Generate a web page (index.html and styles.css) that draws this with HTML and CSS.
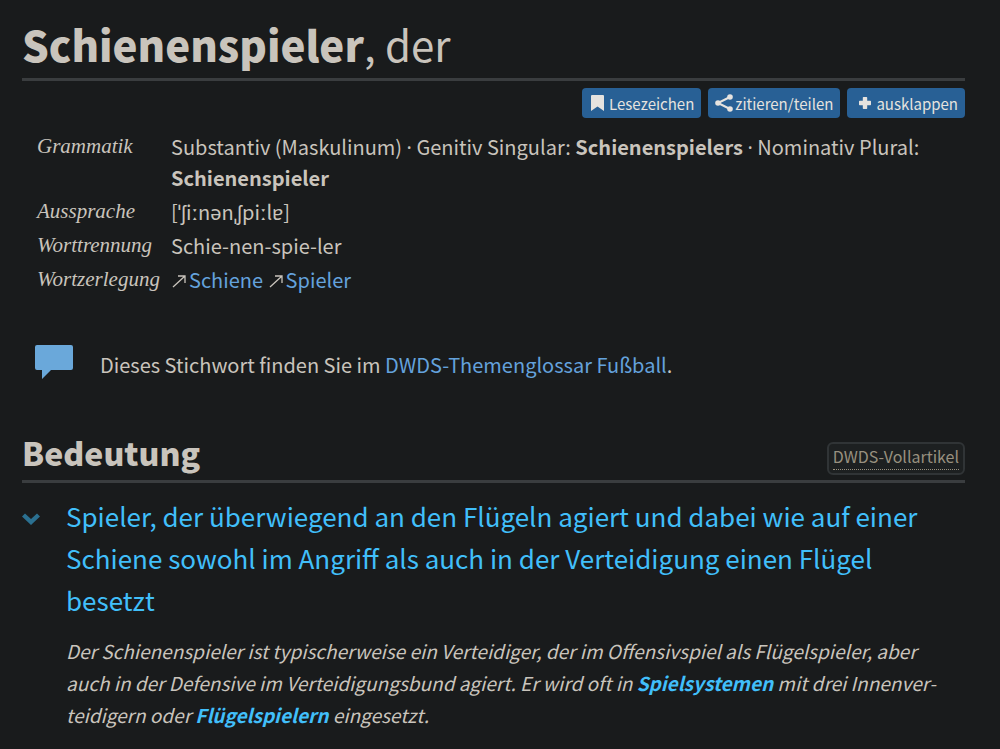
FILE: index.html
```html
<!DOCTYPE html>
<html lang="de">
<head>
  <meta charset="UTF-8">
  <meta name="viewport" content="width=device-width, initial-scale=1">
  <title>Schienenspieler</title>
  <link rel="stylesheet" href="styles.css">
</head>
<body>

  <main class="article">
    <h1 class="headword"><b>Schienenspieler</b>, der</h1>

    <div class="actions">
      <button type="button" class="btn">
        <svg class="icon-bookmark" width="13" height="16" viewBox="0 0 13 16"><path d="M1 0h11a1 1 0 0 1 1 1v15l-6.500-4.500L0 16V1a1 1 0 0 1 1-1z"/></svg>
        Lesezeichen
      </button>
      <button type="button" class="btn btn-share">
        <svg width="18" height="18" viewBox="0 0 18 18"><path class="line" d="M15 3 3 9l12 6"/><circle cx="15" cy="3" r="2.800"/><circle cx="3" cy="9" r="2.800"/><circle cx="15" cy="15" r="2.800"/></svg>
        zitieren/teilen
      </button>
      <button type="button" class="btn btn-expand">
        <svg width="12" height="12" viewBox="0 0 12 12"><path d="M4.500 0h3a.7.7 0 0 1 .7.7v3.100h3.100a.7.7 0 0 1 .7.700v3a.7.7 0 0 1-.7.700H8.200v3.100a.7.7 0 0 1-.7.700h-3a.7.7 0 0 1-.7-.7V8.200H.7a.7.7 0 0 1-.7-.7v-3a.7.7 0 0 1 .7-.7h3.100V.7a.7.7 0 0 1 .7-.7z"/></svg>
        ausklappen
      </button>
    </div>

    <dl class="facts">
      <dt>Grammatik</dt>
      <dd>Substantiv (Maskulinum) <span class="sep">·</span> Genitiv Singular: <b>Schienenspielers</b> <span class="sep">·</span> Nominativ Plural: <b>Schienenspieler</b></dd>
      <dt>Aussprache</dt>
      <dd>[ˈʃiːnənˌʃpiːlɐ]</dd>
      <dt>Worttrennung</dt>
      <dd>Schie-nen-spie-ler</dd>
      <dt>Wortzerlegung</dt>
      <dd>
        <svg class="arrow" width="16" height="16" viewBox="0 0 16 16"><path d="M2 13 14 2M7 2h7v7"/></svg><a href="#">Schiene</a>
        <svg class="arrow" width="16" height="16" viewBox="0 0 16 16"><path d="M2 13 14 2M7 2h7v7"/></svg><a href="#">Spieler</a>
      </dd>
    </dl>

    <div class="hint">
      <svg class="bubble" width="38" height="34" viewBox="0 0 38 34"><path d="M2 0h34a2 2 0 0 1 2 2v21a2 2 0 0 1-2 2H16L7 34V25H2a2 2 0 0 1-2-2V2a2 2 0 0 1 2-2z"/></svg>
      <p>Dieses Stichwort finden Sie im <a href="#">DWDS-Themenglossar Fußball</a>.</p>
    </div>

    <div class="section-head">
      <h2>Bedeutung</h2>
      <span class="badge"><abbr>DWDS-Vollartikel</abbr></span>
    </div>

    <section class="sense">
      <button type="button" class="toggle" aria-label="Bedeutung einklappen">
        <svg width="18" height="12" viewBox="0 0 18 12"><path d="M0 3.500 3 .5l6 5.500 6-5.500 3 3L9 12z"/></svg>
      </button>
      <div class="sense-body">
        <p class="definition">Spieler, der überwiegend an den Flügeln agiert und dabei wie auf einer Schiene sowohl im Angriff als auch in der Verteidigung einen Flügel besetzt</p>
        <p class="note">Der Schienenspieler ist typischerweise ein Verteidiger, der im Offensivspiel als Flügelspieler, aber auch in der Defensive im Verteidigungsbund agiert. Er wird oft in <a href="#">Spielsystemen</a> mit drei Innenver&shy;teidigern oder <a href="#">Flügelspielern</a> eingesetzt.</p>
      </div>
    </section>
  </main>

</body>
</html>
```
FILE: styles.css
```css
:root {
  --background: #191b1c;
  --text-color: #c9c4bc;
  --rule: #3a3d3f;
  --link: #64a2dc;
  --accent: #41bffa;
  --button: #286095;
}

* {
  box-sizing: border-box;
}

body {
  margin: 0;
  background: var(--background);
  color: var(--text-color);
  font-family: "Noto Sans CJK SC", "Noto Sans", sans-serif;
  font-size: 20px;
  line-height: 31px;
}

h1, h2, p, dl, dd {
  margin: 0;
}

a {
  color: var(--link);
  text-decoration: none;
}

.article {
  padding: 13px 35px 16px 22px;
}

.headword {
  padding-bottom: 3px;
  border-bottom: 3px solid var(--rule);
  font-size: 42px;
  font-weight: 400;
  line-height: 62px;
}

.headword b,
.section-head h2 {
  font-weight: 900;
}

.actions {
  display: flex;
  justify-content: flex-end;
  gap: 7px;
  margin-top: 7px;
}

.btn {
  display: flex;
  align-items: center;
  gap: 5px;
  height: 30px;
  padding: 0 7px;
  border: none;
  border-radius: 4px;
  background: var(--button);
  color: #e6e3df;
  font-family: inherit;
  font-size: 15px;
  cursor: pointer;
}

.btn svg {
  fill: currentColor;
}

.btn .icon-bookmark {
  margin-left: 2px;
}

.btn .line {
  fill: none;
  stroke: currentColor;
  stroke-width: 2;
}

.btn-share {
  gap: 2px;
}

.btn-expand {
  padding-left: 12px;
}

.facts {
  display: grid;
  grid-template-columns: 134px 1fr;
  margin: 13px 0 0 15px;
}

.facts dt,
.facts dd {
  padding-bottom: 3px;
}

.facts dt {
  font-family: "Liberation Serif", serif;
  font-style: italic;
  font-size: 21px;
}

.sep {
  font-family: "Noto Sans", sans-serif;
  line-height: 1;
}

.arrow {
  margin-right: 2px;
  vertical-align: -2px;
  fill: none;
  stroke: currentColor;
  stroke-width: 1.3;
}

.hint {
  display: flex;
  gap: 27px;
  margin: 47px 0 0 13px;
}

.hint p {
  padding-top: 4px;
}

.bubble {
  fill: #6aa8da;
}

.section-head {
  display: flex;
  align-items: flex-end;
  justify-content: space-between;
  margin-top: 48px;
  border-bottom: 3px solid var(--rule);
}

.section-head h2 {
  padding-bottom: 4px;
  font-size: 32px;
  line-height: 48px;
}

.badge {
  margin-bottom: 5px;
  padding: 0 4px 3px;
  border: 2px solid #303436;
  border-radius: 6px;
  background: #1d2021;
  color: #98907f;
  font-size: 16px;
  line-height: 25px;
}

.badge abbr {
  display: block;
  border-bottom: 1px dotted #98907f;
}

.sense {
  display: flex;
  align-items: flex-start;
  gap: 26px;
  margin-top: 12px;
}

.toggle {
  display: flex;
  padding: 18px 0;
  border: none;
  background: none;
  cursor: pointer;
}

.toggle svg {
  fill: #2b7090;
}

.sense-body {
  flex: 1;
}

.definition {
  color: var(--accent);
  font-size: 26px;
  line-height: 42px;
}

.note {
  margin-top: 14px;
  padding-right: 16px;
  font-size: 19px;
  font-style: italic;
  line-height: 32px;
  hyphenate-character: "-";
}

.note a {
  color: var(--accent);
  font-weight: 700;
}
```
